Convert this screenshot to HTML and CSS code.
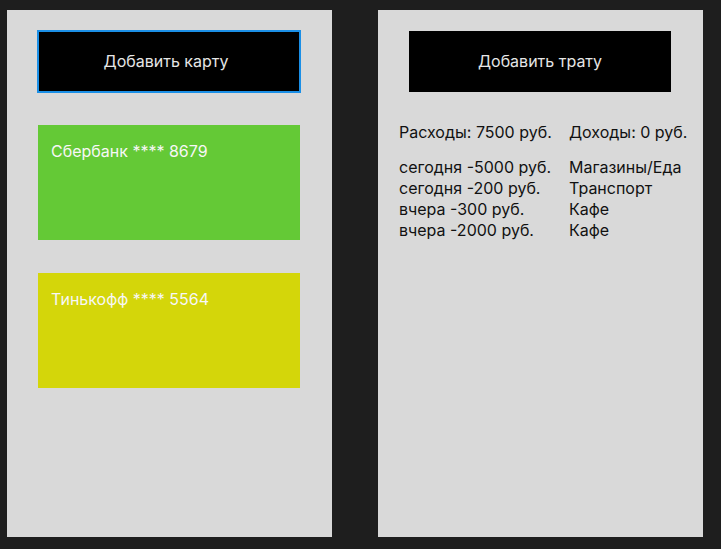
FILE: index.html
```html
<!DOCTYPE html>
<html lang="ru">
<head>
<meta charset="utf-8">
<title>Финансы</title>
<link rel="stylesheet" href="styles.css">
</head>
<body>
<main class="screen">
  <section class="panel panel-cards">
    <button class="btn btn-focused">Добавить карту</button>
    <div class="cards">
      <div class="card card-sber">Сбербанк **** 8679</div>
      <div class="card card-tinkoff">Тинькофф **** 5564</div>
    </div>
  </section>
  <section class="panel panel-spend">
    <button class="btn">Добавить трату</button>
    <div class="totals">
      <span>Расходы: 7500 руб.</span>
      <span>Доходы: 0 руб.</span>
    </div>
    <div class="ops">
      <span>сегодня -5000 руб.</span><span>Магазины/Еда</span>
      <span>сегодня -200 руб.</span><span>Транспорт</span>
      <span>вчера -300 руб.</span><span>Кафе</span>
      <span>вчера -2000 руб.</span><span>Кафе</span>
    </div>
  </section>
</main>
</body>
</html>
```
FILE: styles.css
```css
html, body {
  margin: 0;
  padding: 0;
  background: #1e1e1e;
}
body {
  font-family: Inter, "Noto Sans", sans-serif;
  width: 721px;
  height: 549px;
  overflow: hidden;
}
.screen {
  display: flex;
  gap: 46px;
  padding: 10px 0 0 7px;
}
.panel {
  width: 325px;
  height: 527px;
  box-sizing: border-box;
  background: #d9d9d9;
  padding: 21px 31px 0 31px;
}
.panel-cards {
  padding-top: 20px;
}
.panel-spend {
  padding: 21px 10px 0 21px;
}
.btn {
  display: block;
  width: 262px;
  height: 61px;
  border: none;
  background: #000;
  color: #e6e6e6;
  font-family: Inter, "Noto Sans", sans-serif;
  font-size: 16px;
  padding: 0 0 2px 0;
  margin: 0;
}
.panel-spend .btn {
  margin-left: 10px;
}
.btn-focused {
  width: 264px;
  height: 63px;
  margin-left: -1px;
  border: 2px solid #1b8fe6;
  padding-right: 6px;
}
.cards {
  display: flex;
  flex-direction: column;
  gap: 33px;
  margin-top: 32px;
}
.card {
  width: 262px;
  height: 115px;
  box-sizing: border-box;
  padding: 16px 13px;
  color: #f7f7f7;
  font-size: 16px;
  line-height: 20px;
}
.card-sber { background: #64c936; }
.card-tinkoff { background: #d4d60a; }
.totals, .ops {
  display: grid;
  grid-template-columns: 170px auto;
  color: #111;
  font-size: 16px;
  line-height: 21px;
}
.totals {
  margin-top: 30px;
}
.ops {
  margin-top: 14px;
}
```
